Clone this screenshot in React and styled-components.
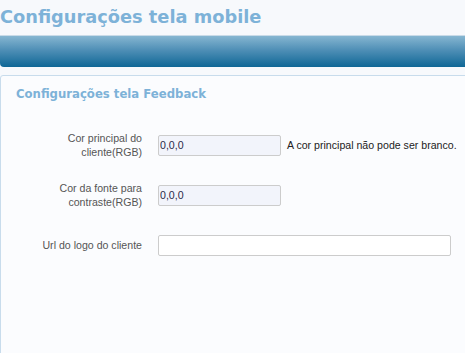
import styled, { createGlobalStyle } from 'styled-components';

const GlobalStyle = createGlobalStyle`
  html, body {
    margin: 0;
    padding: 0;
    background: #f7f9fc;
  }
  #root {
    height: 353px;
    overflow: hidden;
  }
`;

const Page = styled.div`
  width: 465px;
  height: 353px;
  overflow: hidden;
  background: #f7f9fc;
`;

const Title = styled.h1`
  margin: 0;
  padding: 4px 0 0 0;
  height: 31px;
  font-family: "DejaVu Sans", Verdana, sans-serif;
  font-weight: bold;
  font-size: 17.8px;
  line-height: 26px;
  color: #7db2d8;
  white-space: nowrap;
`;

const HeaderBar = styled.div`
  height: 31px;
  margin-right: -10px;
  border-top: 1px solid #c9dbe8;
  border-radius: 0 0 0 4px;
  background: linear-gradient(to bottom, #86b6d1 0%, #4f8fb6 45%, #0f6796 100%);
`;

const Panel = styled.section`
  margin-top: 8px;
  margin-right: -10px;
  height: 300px;
  border: 1px solid #c8dcec;
  border-radius: 3px 0 0 0;
  background: #fbfcfe;
`;

const PanelTitle = styled.h2`
  margin: 0;
  padding: 10px 0 0 15px;
  font-family: "DejaVu Sans", Verdana, sans-serif;
  font-weight: bold;
  font-size: 11.7px;
  line-height: 16px;
  color: #7db2d8;
`;

const Form = styled.div`
  display: flex;
  flex-direction: column;
  gap: 22px;
  padding-top: 29px;
`;

const Row = styled.div`
  display: flex;
  align-items: center;
  min-height: 28px;
`;

const Label = styled.label`
  flex-shrink: 0;
  width: 141px;
  text-align: right;
  font-family: "Liberation Sans", Arial, sans-serif;
  font-size: 10.6px;
  line-height: 14px;
  color: #555;
`;

const Input = styled.input`
  flex-shrink: 0;
  box-sizing: border-box;
  margin: 0 0 0 16px;
  width: ${p => p.$wide ? '293px' : '123px'};
  height: 21px;
  padding: 0 1px;
  border: 1px solid #cccccc;
  border-radius: 2px;
  background: ${p => p.$wide ? '#ffffff' : '#f2f4fb'};
  font-family: "Liberation Sans", Arial, sans-serif;
  font-size: 10.6px;
  color: #2a2a4a;
  outline: none;
`;

const Note = styled.span`
  margin-left: 6px;
  font-family: "Liberation Sans", Arial, sans-serif;
  font-size: 10.6px;
  color: #222;
  white-space: nowrap;
`;

export default function App() {
  return (
    <Page>
      <GlobalStyle />
      <Title>Configurações tela mobile</Title>
      <HeaderBar />
      <Panel>
        <PanelTitle>Configurações tela Feedback</PanelTitle>
        <Form>
          <Row>
            <Label>Cor principal do<br />cliente(RGB)</Label>
            <Input defaultValue="0,0,0" />
            <Note>A cor principal não pode ser branco.</Note>
          </Row>
          <Row>
            <Label>Cor da fonte para<br />contraste(RGB)</Label>
            <Input defaultValue="0,0,0" />
          </Row>
          <Row>
            <Label>Url do logo do cliente</Label>
            <Input $wide defaultValue="" />
          </Row>
        </Form>
      </Panel>
    </Page>
  );
}
